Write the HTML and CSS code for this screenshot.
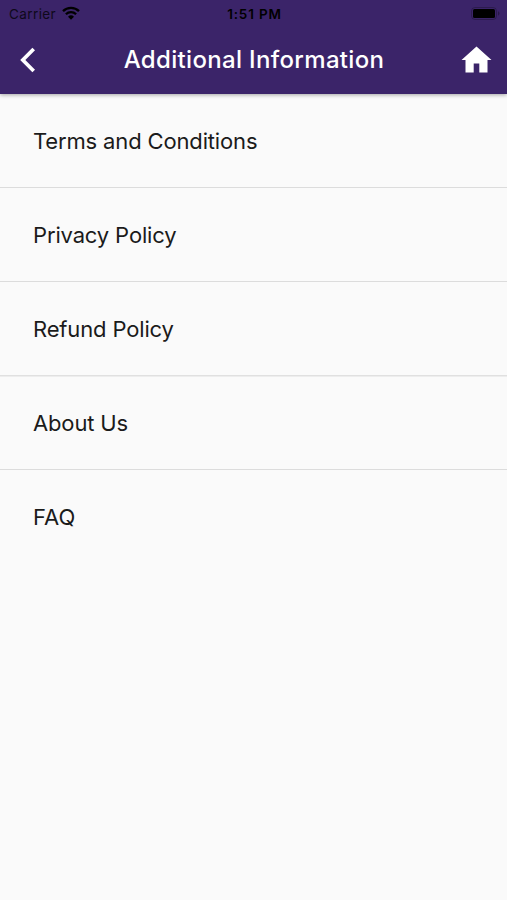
FILE: index.html
```html
<!DOCTYPE html>
<html lang="en">
<head>
<meta charset="utf-8">
<title>Additional Information</title>
<link rel="stylesheet" href="styles.css">
</head>
<body>
<header class="top">
  <div class="status">
    <div class="carrier"><span class="carrier-name">Carrier</span>
      <svg class="wifi" width="18" height="14" viewBox="0 0 18 14"><path d="M1 5.100a11.300 11.300 0 0 1 16 0M3.900 8.200a7.200 7.200 0 0 1 10.200 0" fill="none" stroke="#000" stroke-width="2.300"/><path d="M9 13.800 6 10.700a4.300 4.300 0 0 1 6 0z"/></svg>
    </div>
    <span class="time">1:51 PM</span>
    <svg class="battery" width="29" height="13" viewBox="0 0 29 13"><rect x=".5" y=".5" width="25" height="12" rx="3.500" fill="none" stroke="#000" stroke-opacity=".25"/><rect x="2" y="2" width="22" height="9" rx="1.500"/><path d="M27 4.300q1.500.6 1.500 2.200T27 8.700z" fill-opacity=".3"/></svg>
  </div>
  <nav class="bar">
    <svg class="back" width="16" height="26" viewBox="0 0 16 26"><path d="M13.700 2 2.800 13l10.900 11" fill="none" stroke="#fff" stroke-width="3.700"/></svg>
    <h1 class="title">Additional Information</h1>
    <svg class="home" width="31" height="27" viewBox="0 0 31 27"><path d="M12.700 26.500V17.500h5.600v9h8.200v-12.500h4L15.500.5.5 14h4v12.500z" fill="#fff"/></svg>
  </nav>
</header>
<ul class="list">
  <li class="row"><span class="label">Terms and Conditions</span></li>
  <li class="row"><span class="label">Privacy Policy</span></li>
  <li class="row soft"><span class="label">Refund Policy</span></li>
  <li class="row"><span class="label">About Us</span></li>
  <li class="row"><span class="label faq">FAQ</span></li>
</ul>
</body>
</html>
```
FILE: styles.css
```css
* { box-sizing: border-box; }
body { margin: 0; min-height: 900px; background: #fafafa; color: #1b1b1b; font-family: Inter, "Liberation Sans", sans-serif; }
.top { position: relative; height: 94px; background: #3b2469; box-shadow: 0 1px 4px rgba(0,0,0,.35); }
.status { display: grid; grid-template-columns: 1fr auto 1fr; align-items: center; height: 27px; padding: 0 7px 0 9px; color: #000; }
.carrier { display: flex; align-items: center; gap: 6px; }
.wifi { margin-top: -2px; }
.carrier-name { font-size: 13.5px; letter-spacing: .4px; opacity: .75; }
.time { font-size: 13.5px; font-weight: 600; letter-spacing: .85px; }
.battery { justify-self: end; }
.bar { display: grid; grid-template-columns: 1fr auto 1fr; align-items: center; height: 65px; padding: 0 15px 0 20px; }
.home { justify-self: end; }
.title { position: relative; left: -2px; margin: 0; color: #fff; font-size: 24px; font-weight: 500; letter-spacing: .33px; white-space: nowrap; }
.list { margin: 0; padding: 0; list-style: none; }
.row { display: flex; align-items: center; height: 94px; padding: 0 33px; border-bottom: 1px solid #dcdcdc; }
.row.soft { border-bottom-color: #e0e0e0; box-shadow: 0 1px 0 #ededed; }
.row:last-child { border-bottom: 0; }
.label { font-size: 22px; letter-spacing: -.15px; white-space: nowrap; }
.label.faq { letter-spacing: .1px; }
```
